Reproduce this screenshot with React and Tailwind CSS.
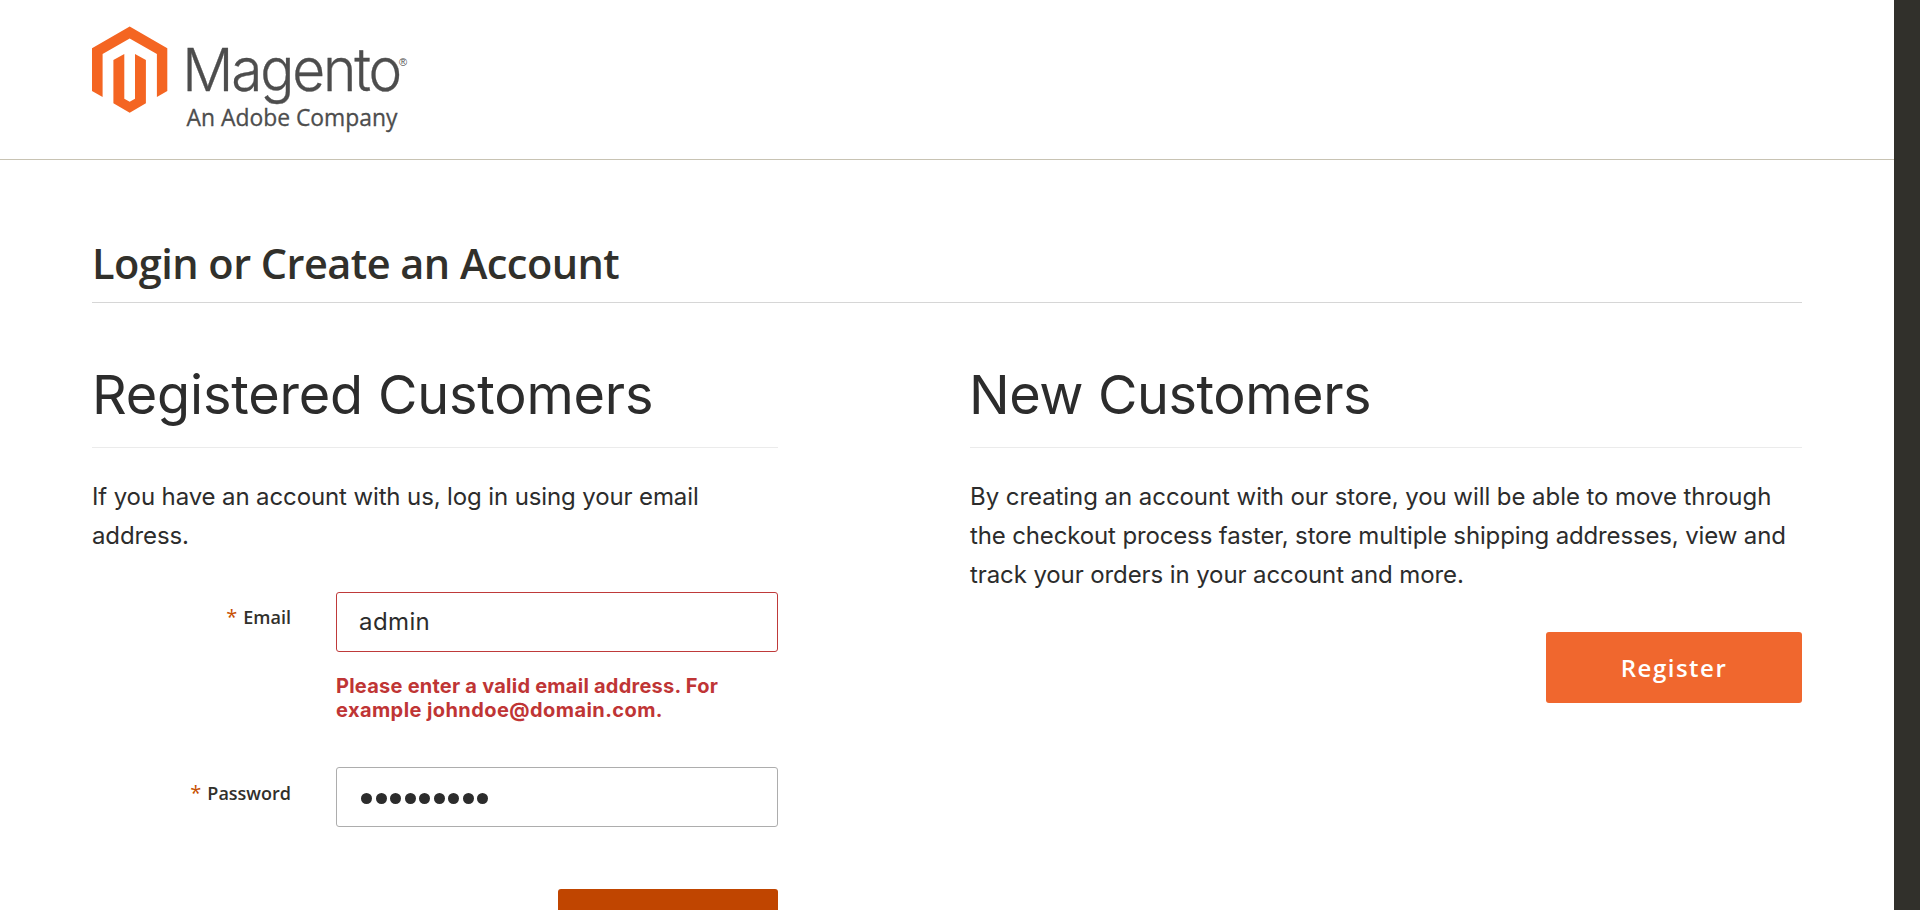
function Logo() {
  return (
    <svg className="block h-[112px] w-[320px]" viewBox="92 22 320 112" role="img" aria-label="Magento, An Adobe Company">
      <path
        fill="#f46522"
        d="M129.7 26.6 167.3 48.2V91L156.9 97V53.9L129.7 38.4 102.6 53.9V97L92 91V48.2Z"
      />
      <path
        fill="#f46522"
        d="M113.4 60 124.3 54V98.7L129.7 101.7 135 98.7V54L145.9 60V103.3L129.7 112.8 113.4 103.3Z"
      />
      <g fill="#4d4d4d">
        <text
          transform="translate(182.2 91) scale(0.955 1)"
          fontSize="59.5"
          fontWeight="300"
          fontFamily="Inter, sans-serif"
          letterSpacing="-2.3"
          stroke="#4d4d4d"
          strokeWidth="0.3"
        >
          Magento
        </text>
        <text x="399" y="65.5" fontSize="11" fontFamily="'Liberation Sans', sans-serif">
          ®
        </text>
        <text
          x="186.5"
          y="126"
          fontSize="24"
          fontFamily="'Open Sans', sans-serif"
          textLength="211"
          lengthAdjust="spacingAndGlyphs"
          stroke="#4d4d4d"
          strokeWidth="0.3"
        >
          An Adobe Company
        </text>
      </g>
    </svg>
  );
}

function ColumnTitle({ children, className }) {
  return (
    <h2 className={`border-b border-[#ebebeb] pt-px pb-[22px] text-[54px] leading-[60px] ${className}`}>{children}</h2>
  );
}

function Field({ label, labelClass, children }) {
  return (
    <div className="flex">
      <label
        className={`w-[199px] shrink-0 text-right font-['Open_Sans',sans-serif] text-[18px] leading-6 font-semibold text-[#31302b] ${labelClass}`}
      >
        <span className="mr-[6px] text-[20px] leading-none font-medium text-[#c75000]">*</span>
        {label}
      </label>
      <div className="ml-[45px] w-[442px]">{children}</div>
    </div>
  );
}

export default function App() {
  return (
    <div className="flex h-[910px] w-full overflow-hidden bg-white font-[Inter,sans-serif] text-[#2c2c2c]">
      <div className="w-[1894px] shrink-0">
        <header className="h-40 border-b border-[#c8c3b3] pt-[22px] pl-[92px]">
          <Logo />
        </header>
        <main className="ml-[92px] w-[1710px] pt-[78px]">
          <h1 className="border-b border-[#d6d6d6] pb-[14px] font-['Open_Sans',sans-serif] text-[41.5px] leading-[50px] font-semibold tracking-[-0.54px] text-[#31302b]">
            Login or Create an Account
          </h1>
          <div className="mt-[61px] flex gap-[192px]">
            <section className="w-[686px]">
              <ColumnTitle className="tracking-[-0.18px]">Registered Customers</ColumnTitle>
              <p className="mt-[29px] text-2xl leading-[39px] tracking-[-0.12px]">
                If you have an account with us, log in using your email
                <br />
                address.
              </p>
              <form className="mt-[37px]" onSubmit={(e) => e.preventDefault()}>
                <Field label="Email" labelClass="mt-[13px]">
                  <input
                    type="text"
                    defaultValue="admin"
                    className="block h-[60px] w-full rounded-[3px] border border-[#bf3a3a] px-[22px] pb-[2px] text-2xl tracking-[0.4px] outline-none"
                  />
                  <p className="mt-[22px] text-[20px] leading-6 font-bold text-[#bf3535]">
                    <span className="tracking-[0.24px]">Please enter a valid email address. For</span>
                    <br />
                    <span className="tracking-[0.42px]">example johndoe@domain.com.</span>
                  </p>
                </Field>
                <div className="mt-[45px]">
                  <Field label="Password" labelClass="mt-[14px]">
                    <div className="flex h-[60px] w-full items-center gap-[3.5px] rounded-[3px] border border-[#adadad] pt-[2px] pl-6">
                      {Array.from({ length: 9 }, (_, i) => (
                        <span key={i} className="size-[11px] rounded-full bg-[#2c2c2c]" />
                      ))}
                    </div>
                  </Field>
                </div>
                <button aria-label="Login" className="mt-[62px] ml-auto block h-[71px] w-[220px] rounded-[3px] bg-[#c04500]" />
              </form>
            </section>
            <section className="w-[832px]">
              <ColumnTitle className="-indent-px tracking-[-0.42px]">New Customers</ColumnTitle>
              <p className="mt-[29px] text-2xl leading-[39px] whitespace-nowrap">
                <span className="tracking-[-0.06px]">By creating an account with our store, you will be able to move through</span>
                <br />
                <span className="tracking-[-0.14px]">the checkout process faster, store multiple shipping addresses, view and</span>
                <br />
                <span className="tracking-[-0.1px]">track your orders in your account and more.</span>
              </p>
              <button className="mt-[38px] ml-auto block h-[71px] w-64 rounded-[3px] bg-[#f0672e] font-['Open_Sans',sans-serif] text-2xl font-semibold tracking-[1.5px] text-white">
                Register
              </button>
            </section>
          </div>
        </main>
      </div>
      <aside className="flex-1 bg-[#31302b]" />
    </div>
  );
}
